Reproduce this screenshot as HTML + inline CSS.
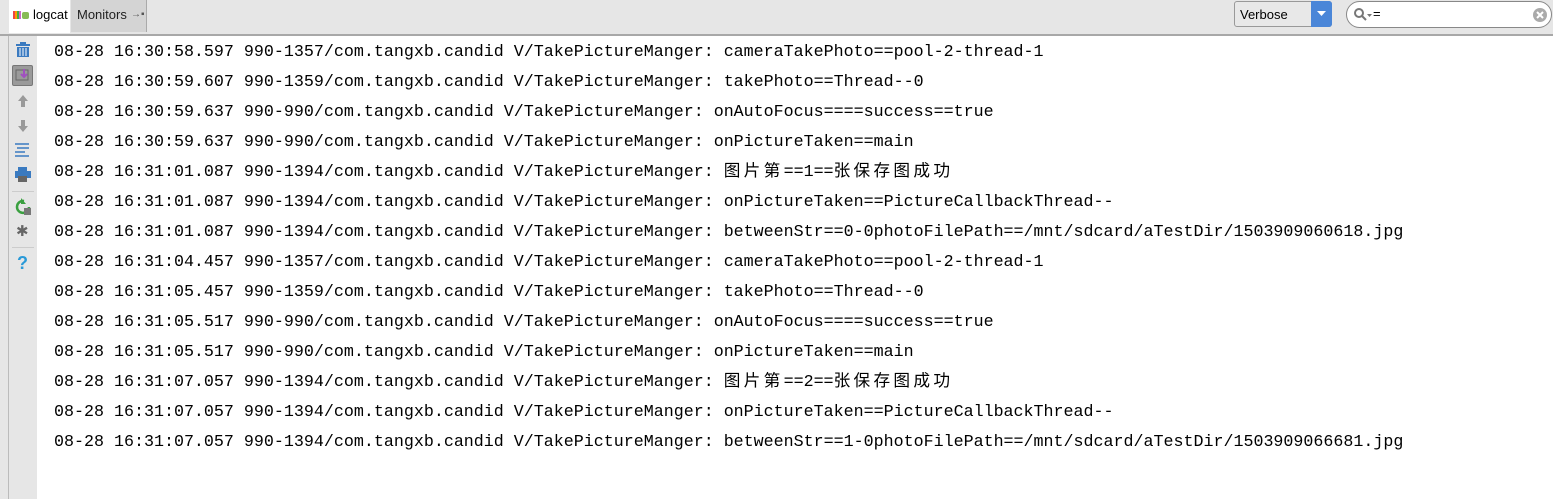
<!DOCTYPE html>
<html><head><meta charset="utf-8"><style>
body{margin:0;width:1553px;height:499px;overflow:hidden;background:#fff;position:relative;font-family:"Liberation Sans",sans-serif}
.top{position:absolute;left:0;top:0;width:1553px;height:34px;background:#e6e6e6;border-bottom:2px solid #a8a8a8}
.tab1{position:absolute;left:9px;top:0;width:61px;height:33px;background:#fff;font-size:13px;line-height:29px}
.tab2{position:absolute;left:71px;top:0;width:75px;height:32px;background:#d4d4d4;border-right:1px solid #aaa;font-size:13px;line-height:29px;color:#222}
.side{position:absolute;left:0;top:36px;width:8px;height:463px;background:#e6e6e6;border-right:1px solid #bbb}
.side2{position:absolute;left:9px;top:36px;width:28px;height:463px;background:#e6e6e6}
.sel{position:absolute;left:1234px;top:1px;width:98px;height:26px;border:1px solid #999;border-radius:3px;background:#e8e8e8;font-size:13px;line-height:25px;box-sizing:border-box;padding-left:5px}
.sel b{position:absolute;right:-1px;top:-1px;width:21px;height:26px;background:#4a86d8;border-radius:0 3px 3px 0}
.srch{position:absolute;left:1346px;top:1px;width:206px;height:27px;border:1px solid #888;border-radius:14px;background:#fff;box-sizing:border-box}
.log{position:absolute;left:54px;top:38px;font-family:"Liberation Mono","Noto Sans CJK SC",monospace;font-size:16.67px;line-height:30px;white-space:pre;color:#000}
.c{letter-spacing:3.3px}
</style></head><body>
<div class="top">
<div class="tab1"><svg style="position:absolute;left:4px;top:9px" width="16" height="10"><rect x="0" y="2" width="2" height="8" fill="#e44"/><rect x="2" y="2" width="2" height="8" fill="#f90"/><rect x="4" y="2" width="2" height="8" fill="#4a4"/><rect x="6" y="2" width="2" height="8" fill="#c6c"/><rect x="9" y="3" width="7" height="7" rx="2" fill="#8b5"/></svg><span style="position:absolute;left:24px">logcat</span></div>
<div class="tab2"><span style="position:absolute;left:6px">Monitors</span><span style="position:absolute;left:60px;font-size:10px;color:#555">→▪</span></div>
<div class="sel">Verbose<b><svg width="21" height="26"><path d="M6 10h9l-4.5 5z" fill="#fff"/></svg></b></div>
<div class="srch"><svg style="position:absolute;left:6px;top:5px" width="20" height="16"><circle cx="6" cy="6" r="4" stroke="#777" stroke-width="2" fill="none"/><path d="M9 9l4 4" stroke="#777" stroke-width="2"/><path d="M14 7h5l-2.5 3z" fill="#777"/></svg><span style="position:absolute;left:26px;top:4px;font-size:13px">=</span><svg style="position:absolute;right:3px;top:5px" width="16" height="16"><circle cx="8" cy="8" r="7" fill="#aaa"/><path d="M5 5l6 6M11 5l-6 6" stroke="#fff" stroke-width="2"/></svg></div>
</div>
<div class="side"></div><div class="side2">
<svg style="position:absolute;left:6px;top:6px" width="16" height="16"><rect x="1" y="2" width="14" height="2" fill="#3a7ac0"/><rect x="5" y="0" width="6" height="2" fill="#3a7ac0"/><rect x="2" y="5" width="12" height="10" fill="#3a7ac0"/><path d="M5 6v8M8 6v8M11 6v8" stroke="#fff"/></svg>
<div style="position:absolute;left:3px;top:29px;width:21px;height:21px;background:#9a9a9a;border:1px solid #777;border-radius:2px;box-sizing:border-box"><svg width="19" height="19"><rect x="3" y="4" width="12" height="10" fill="none" stroke="#666"/><path d="M11 3v7M8 8l3 3 3-3" stroke="#a050c0" stroke-width="2" fill="none"/></svg></div>
<svg style="position:absolute;left:7px;top:58px" width="14" height="14"><path d="M7 1l5 6H9v6H5V7H2z" fill="#999"/></svg>
<svg style="position:absolute;left:7px;top:83px" width="14" height="14"><path d="M7 13l5-6H9V1H5v6H2z" fill="#999"/></svg>
<svg style="position:absolute;left:5px;top:106px" width="18" height="16"><path d="M1 2h14M1 14h14M3 6h12M1 10h10" stroke="#3a7ac0" stroke-width="1.5"/></svg>
<svg style="position:absolute;left:5px;top:131px" width="18" height="16"><rect x="4" y="0" width="9" height="4" fill="#3a7ac0"/><rect x="1" y="4" width="16" height="7" fill="#3a7ac0"/><rect x="4" y="9" width="9" height="6" fill="#666"/></svg>
<div style="position:absolute;left:3px;top:155px;width:22px;border-top:1px solid #ccc"></div>
<svg style="position:absolute;left:5px;top:162px" width="18" height="18"><path d="M10 3a6 6 0 1 0 5 6" stroke="#3aa040" stroke-width="2.5" fill="none"/><path d="M7 0v6h5z" fill="#3aa040"/><rect x="10" y="10" width="7" height="7" fill="#777"/></svg>
<div style="position:absolute;left:7px;top:186px;font-size:15px;color:#666">✱</div>
<div style="position:absolute;left:3px;top:211px;width:22px;border-top:1px solid #ccc"></div>
<div style="position:absolute;left:8px;top:217px;font-size:18px;font-weight:bold;color:#2a9ad8">?</div>
</div>
<div class="log">08-28 16:30:58.597 990-1357/com.tangxb.candid V/TakePictureManger: cameraTakePhoto==pool-2-thread-1
08-28 16:30:59.607 990-1359/com.tangxb.candid V/TakePictureManger: takePhoto==Thread--0
08-28 16:30:59.637 990-990/com.tangxb.candid V/TakePictureManger: onAutoFocus====success==true
08-28 16:30:59.637 990-990/com.tangxb.candid V/TakePictureManger: onPictureTaken==main
08-28 16:31:01.087 990-1394/com.tangxb.candid V/TakePictureManger: <span class="c">图片第</span>==1==<span class="c">张保存图成功</span>
08-28 16:31:01.087 990-1394/com.tangxb.candid V/TakePictureManger: onPictureTaken==PictureCallbackThread--
08-28 16:31:01.087 990-1394/com.tangxb.candid V/TakePictureManger: betweenStr==0-0photoFilePath==/mnt/sdcard/aTestDir/1503909060618.jpg
08-28 16:31:04.457 990-1357/com.tangxb.candid V/TakePictureManger: cameraTakePhoto==pool-2-thread-1
08-28 16:31:05.457 990-1359/com.tangxb.candid V/TakePictureManger: takePhoto==Thread--0
08-28 16:31:05.517 990-990/com.tangxb.candid V/TakePictureManger: onAutoFocus====success==true
08-28 16:31:05.517 990-990/com.tangxb.candid V/TakePictureManger: onPictureTaken==main
08-28 16:31:07.057 990-1394/com.tangxb.candid V/TakePictureManger: <span class="c">图片第</span>==2==<span class="c">张保存图成功</span>
08-28 16:31:07.057 990-1394/com.tangxb.candid V/TakePictureManger: onPictureTaken==PictureCallbackThread--
08-28 16:31:07.057 990-1394/com.tangxb.candid V/TakePictureManger: betweenStr==1-0photoFilePath==/mnt/sdcard/aTestDir/1503909066681.jpg</div>
</body></html>
